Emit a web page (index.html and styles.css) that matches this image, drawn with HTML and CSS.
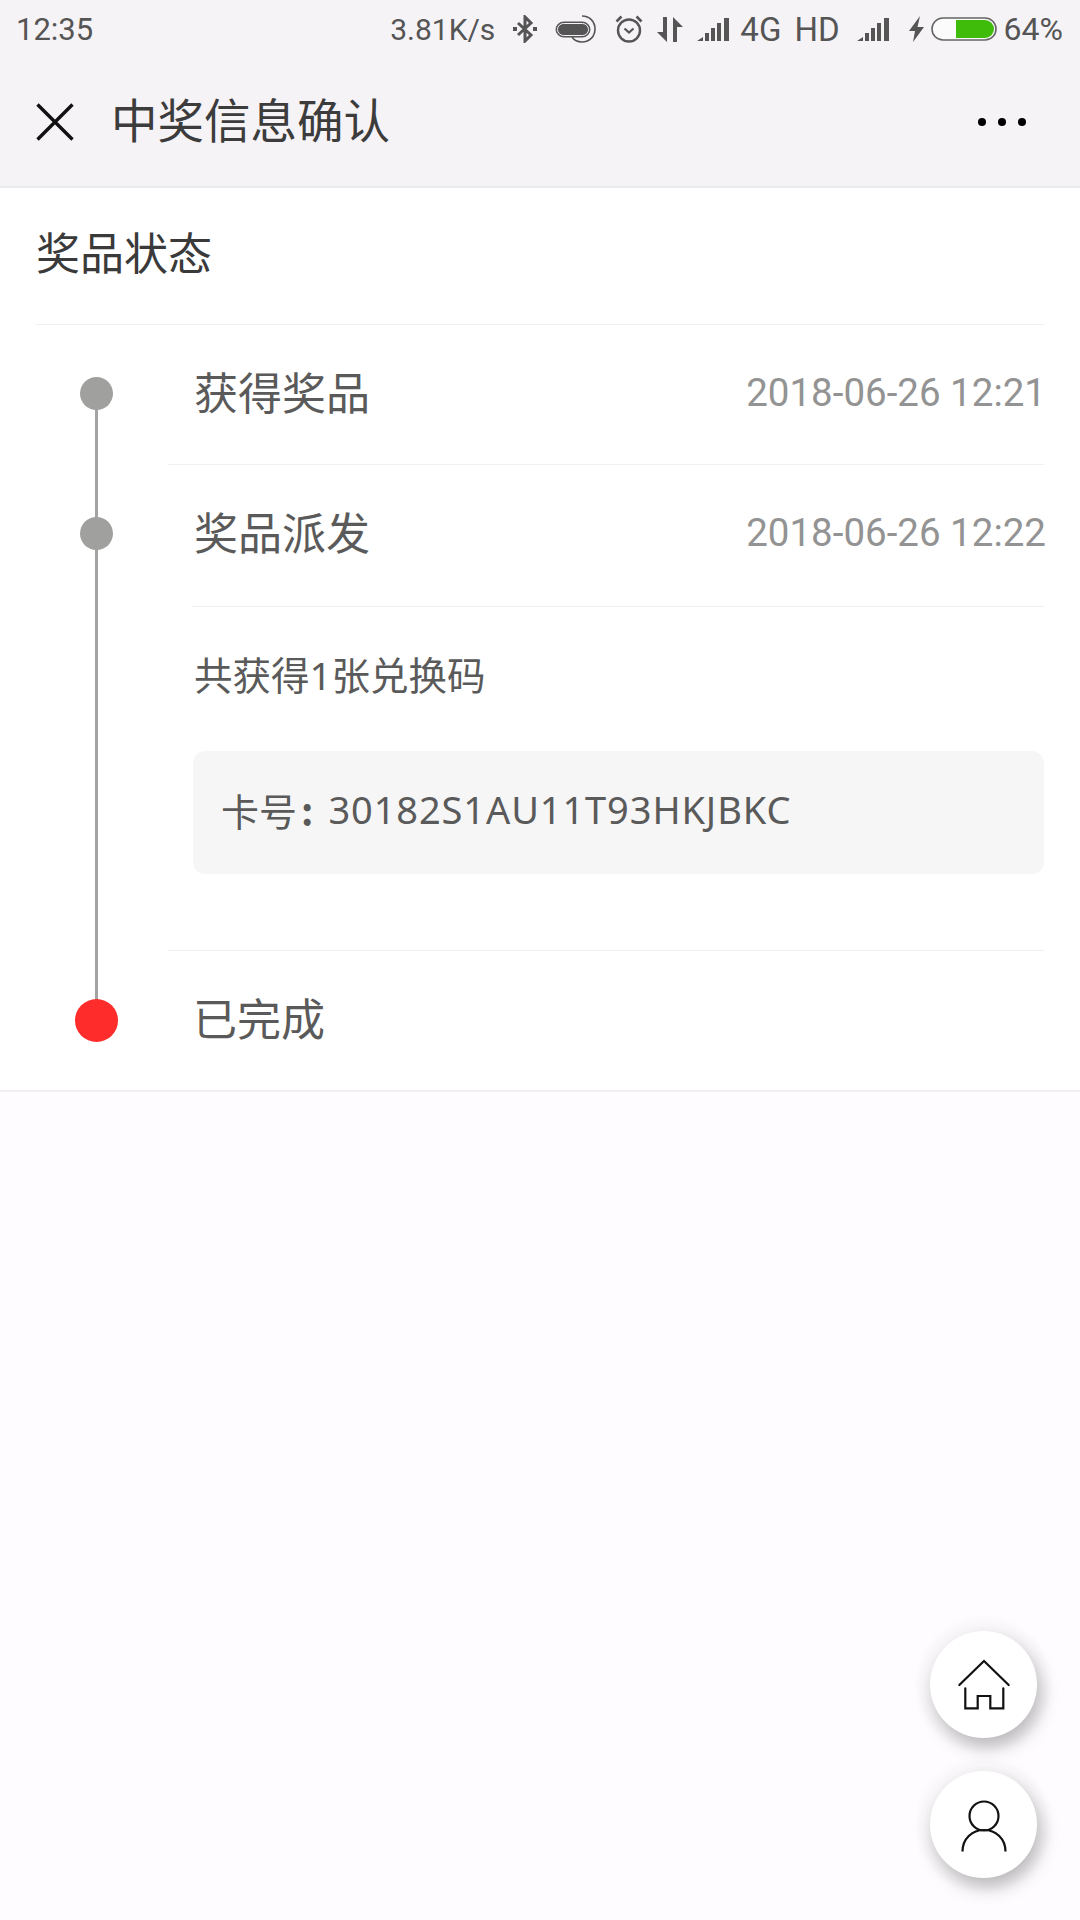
FILE: index.html
```html
<!DOCTYPE html>
<html lang="zh-CN">
<head>
<meta charset="utf-8">
<title>中奖信息确认</title>
<link rel="stylesheet" href="styles.css">
</head>
<body>
<div class="page">
  <header class="top">
    <div class="status">
      <span class="time">12:35</span>
      <span class="speed">3.81K/s</span>
      <svg class="ic ic-bt" viewBox="0 0 24 28"><path d="M5 8l13 12-6 6V2l6 6L5 20" fill="none" stroke="#555" stroke-width="3"/><rect x="0" y="12" width="4" height="4" fill="#555"/><rect x="20" y="12" width="4" height="4" fill="#555"/></svg>
      <svg class="ic ic-pill" viewBox="0 0 42 28"><rect x="1" y="7" width="34" height="15" rx="7.5" fill="#555" stroke="#555" stroke-width="1"/><rect x="2.500" y="8.500" width="31" height="12" rx="6" fill="#555" stroke="#f6f3f7" stroke-width="1"/><path d="M27 1c8 0 13 6 13 13s-5 13-13 13c-5 0-8-2-10-5" fill="none" stroke="#555" stroke-width="1.600"/></svg>
      <svg class="ic ic-alarm" viewBox="0 0 28 28"><circle cx="14" cy="15.500" r="11" fill="none" stroke="#555" stroke-width="2.400"/><path d="M9.500 13.500l4.500 4 4.500-4" fill="none" stroke="#555" stroke-width="2.200"/><path d="M1.500 6.500L6.500 1.500M21.500 1.500l5 5" stroke="#555" stroke-width="2.600" fill="none"/></svg>
      <svg class="ic ic-arrows" viewBox="0 0 26 25"><path d="M0 15h6V0h4v25z" fill="#555"/><path d="M16 0l10 10h-6v15h-4z" fill="#555"/></svg>
      <svg class="ic ic-signal" viewBox="0 0 33 23"><path d="M0 23l6-4v4z" fill="#555"/><rect x="8" y="15" width="4" height="8" fill="#555"/><rect x="14" y="10" width="4" height="13" fill="#555"/><rect x="20" y="5" width="4" height="18" fill="#555"/><rect x="27" y="0" width="5" height="23" fill="#555"/></svg>
      <span class="net net-4g">4G</span>
      <span class="net net-hd">HD</span>
      <svg class="ic ic-signal ic-signal2" viewBox="0 0 33 23"><path d="M0 23l6-4v4z" fill="#555"/><rect x="8" y="15" width="4" height="8" fill="#555"/><rect x="14" y="10" width="4" height="13" fill="#555"/><rect x="20" y="5" width="4" height="18" fill="#555"/><rect x="27" y="0" width="5" height="23" fill="#555"/></svg>
      <svg class="ic ic-bolt" viewBox="0 0 15 26"><path d="M11 0L0 15h6L4 26l11-15H8.500z" fill="#555"/></svg>
      <svg class="ic ic-batt" viewBox="0 0 66 24"><rect x="1" y="1" width="64" height="22" rx="11" fill="#fbfbfb" stroke="#666" stroke-width="1.600"/><path d="M25 3h29a9 9 0 0 1 0 18H25z" fill="#3fbb0a"/></svg>
      <span class="pct">64%</span>
    </div>
    <div class="nav">
      <svg class="close" viewBox="0 0 38 38"><path d="M1.500 1.500l35 35M36.500 1.500l-35 35" stroke="#111" stroke-width="3.400" fill="none"/></svg>
      <h1 class="title">中奖信息确认</h1>
      <div class="more"><i></i><i></i><i></i></div>
    </div>
  </header>

  <main class="panel">
    <div class="heading-wrap"><h2 class="heading">奖品状态</h2></div>
    <div class="timeline">
      <div class="step step-a">
        <div class="rail"><span class="dot"></span></div>
        <div class="step-body">
          <span class="step-name">获得奖品</span>
          <span class="step-date">2018-06-26 12:21</span>
        </div>
      </div>
      <div class="step step-b">
        <div class="rail"><span class="dot"></span></div>
        <div class="step-body">
          <span class="step-name">奖品派发</span>
          <span class="step-date">2018-06-26 12:22</span>
        </div>
      </div>
      <div class="prize">
        <p class="prize-count">共获得1张兑换码</p>
        <div class="card"><span class="card-label">卡号</span><span class="card-colon">:</span><span class="card-code">30182S1AU11T93HKJBKC</span></div>
      </div>
      <div class="step step-c">
        <div class="rail"><span class="dot dot-end"></span></div>
        <div class="step-body"><span class="step-name">已完成</span></div>
      </div>
    </div>
  </main>

  <div class="fabs">
    <button class="fab" aria-label="首页">
      <svg viewBox="0 0 60 60"><path d="M5.300 30L30 6l24.700 24M11.300 33.300v20h12.400V41h12.600v12.300h13v-20" fill="none" stroke="#111" stroke-width="2.200" stroke-linecap="round"/></svg>
    </button>
    <button class="fab" aria-label="我的">
      <svg viewBox="0 0 60 60"><circle cx="30" cy="21" r="14.500" fill="none" stroke="#111" stroke-width="2.200"/><path d="M8.500 56.500C8.500 44 18 35 30 35s21.500 9 21.500 21.500" fill="none" stroke="#111" stroke-width="2.200"/></svg>
    </button>
  </div>
</div>
</body>
</html>
```
FILE: styles.css
```css
* { box-sizing: border-box; }
html, body { margin: 0; padding: 0; }
body {
  background: #fefcfe;
  font-family: "Noto Sans CJK SC", "Noto Sans", sans-serif;
  color: #555;
}
.page { position: relative; width: 1080px; height: 1920px; overflow: hidden; }

.top { height: 188px; background: #f6f3f7; border-bottom: 2px solid #e9e8ea; }

.status { display: flex; align-items: center; height: 58px; padding: 0 17px 0 16px; font-family: Roboto, sans-serif; font-size: 30px; color: #555; }
.time { width: 78px; font-size: 31px; }
.speed { margin-left: auto; }
.ic { display: block; flex: none; }
.ic-bt { width: 24px; height: 28px; margin-left: 18px; }
.ic-pill { width: 42px; height: 28px; margin-left: 18px; }
.ic-alarm { width: 28px; height: 28px; margin-left: 18px; }
.ic-arrows { width: 26px; height: 25px; margin-left: 14px; }
.ic-signal { width: 33px; height: 23px; margin-left: 14px; }
.ic-signal2 { margin-left: 17px; }
.ic-bolt { width: 15px; height: 26px; margin-left: 19px; }
.ic-batt { width: 66px; height: 24px; margin-left: 7px; }
.net { font-size: 33px; }
.net-4g { margin-left: 10px; }
.net-hd { margin-left: 13px; }
.pct { margin-left: 7px; font-size: 32px; }

.nav { display: flex; align-items: center; height: 128px; padding: 0 54px 0 36px; }
.close { width: 38px; height: 38px; flex: none; }
.title { margin: 0 0 0 37px; padding-bottom: 7px; font-size: 46.500px; font-weight: 400; color: #3c3c3c; line-height: 1; }
.more { margin-left: auto; display: flex; gap: 12px; }
.more i { display: block; width: 8px; height: 8px; border-radius: 50%; background: #000; }

.panel { background: #fff; height: 904px; border-bottom: 2px solid #f1f0f1; }
.heading-wrap { height: 137px; margin: 0 36px; border-bottom: 1px solid #f0f0f0; display: flex; align-items: center; }
.heading { margin: 0; padding-bottom: 10px; font-size: 44px; font-weight: 400; color: #3a3a3a; line-height: 1; }

.timeline { position: relative; margin-right: 36px; }
.timeline::before { content: ""; position: absolute; left: 95px; top: 68px; height: 640px; width: 3px; background: #a3a3a3; }

.step { display: flex; position: relative; }
.rail { display: flex; align-items: center; flex: none; }
.dot { display: block; width: 33px; height: 33px; margin-left: 80px; border-radius: 50%; background: #a0a19f; }
.dot-end { width: 43px; height: 43px; margin-left: 75px; background: #fe2d2b; }
.step-body { flex: 1; display: flex; align-items: center; justify-content: space-between; }
.step-name { padding-bottom: 5px; font-size: 44px; line-height: 1; color: #5a5a5a; }
.step-date { margin-right: -2px; font-family: Roboto, sans-serif; font-size: 38.500px; line-height: 1; color: #939393; }

.step-a { height: 140px; }
.step-a .rail { width: 168px; padding-bottom: 3px; }
.step-a .step-body { border-bottom: 1px solid #f0f0f0; padding: 0 0 3px 26px; }
.step-b { height: 142px; }
.step-b .rail { width: 192px; padding-bottom: 5px; }
.step-b .step-body { border-bottom: 1px solid #f0f0f0; padding: 0 0 5px 2px; }

.prize { margin-left: 168px; height: 344px; border-bottom: 1px solid #f0f0f0; padding-left: 25px; }
.prize-count { margin: 0; height: 136px; display: flex; align-items: center; padding: 0 0 5px 1px; font-size: 38.500px; font-family: "Noto Sans", "Noto Sans CJK SC", sans-serif; color: #5a5a5a; }
.card { margin-top: 8px; height: 123px; padding: 0 0 7px 28px; background: #f6f6f6; border-radius: 12px; display: flex; align-items: center; font-size: 38px; color: #5a5a5a; }
.card-colon { margin-left: 4px; font-weight: 700; }
.card-code { margin-left: 15px; font-family: "Noto Sans", sans-serif; letter-spacing: .9px; }

.step-c { height: 139px; }
.step-c .rail { width: 193px; }
.step-c .step-name { padding-bottom: 7px; }

.fabs { position: absolute; left: 930px; top: 1631px; display: flex; flex-direction: column; gap: 33px; }
.fab {
  display: flex; align-items: center; justify-content: center;
  width: 107px; height: 107px; padding: 0; border: 0; border-radius: 50%;
  background: #fff;
  box-shadow: 4px 9px 18px rgba(0,0,0,.26), 0 0 6px 13px rgba(0,0,0,.02);
}
.fab svg { width: 60px; height: 60px; display: block; }
```
